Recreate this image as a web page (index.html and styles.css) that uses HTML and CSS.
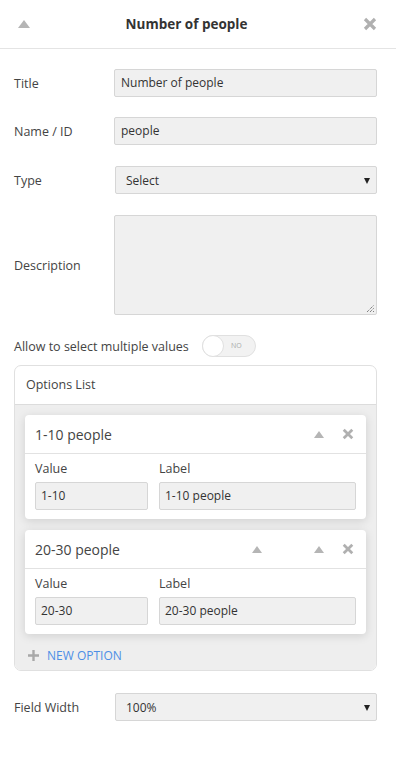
FILE: index.html
```html
<!DOCTYPE html>
<html>
<head>
  <title>Number of people</title>
  <link rel="stylesheet" href="styles.css">
</head>
<body>
  <div class="panel">
    <div class="panel-header">
      <span class="icon-up big"></span>
      <h1>Number of people</h1>
      <svg class="icon-close" width="14" height="14" viewBox="0 0 14 14"><path d="M2 2 L12 12 M12 2 L2 12" stroke="#b0b0b0" stroke-width="3.2"/></svg>
    </div>

    <div class="form">
      <div class="row">
        <label>Title</label>
        <div class="input">Number of people</div>
      </div>
      <div class="row">
        <label>Name / ID</label>
        <div class="input">people</div>
      </div>
      <div class="row type">
        <label>Type</label>
        <div class="input select">Select</div>
      </div>
      <div class="row">
        <label>Description</label>
        <div class="input textarea">
          <svg class="grip" width="9" height="9" viewBox="0 0 9 9"><path d="M1 8 L8 1 M4 8 L8 4 M7 8 L8 7" stroke="#555" stroke-width="1" stroke-dasharray="1 1"/></svg>
        </div>
      </div>
      <div class="toggle-row">
        <label>Allow to select multiple values</label>
        <div class="toggle"><span class="knob"></span><span class="toggle-text">NO</span></div>
      </div>

      <div class="options">
        <div class="options-header">Options List</div>
        <div class="options-body">
          <div class="option">
            <div class="option-header">
              <span class="option-title">1-10 people</span>
              <span class="icon-up"></span>
              <svg class="icon-close" width="12" height="12" viewBox="0 0 14 14"><path d="M2 2 L12 12 M12 2 L2 12" stroke="#b0b0b0" stroke-width="3.2"/></svg>
            </div>
            <div class="option-body">
              <div class="field"><span>Value</span><div class="input">1-10</div></div>
              <div class="field"><span>Label</span><div class="input">1-10 people</div></div>
            </div>
          </div>
          <div class="option">
            <div class="option-header">
              <span class="option-title">20-30 people</span>
              <span class="icon-up extra"></span>
              <span class="icon-up"></span>
              <svg class="icon-close" width="12" height="12" viewBox="0 0 14 14"><path d="M2 2 L12 12 M12 2 L2 12" stroke="#b0b0b0" stroke-width="3.2"/></svg>
            </div>
            <div class="option-body">
              <div class="field"><span>Value</span><div class="input">20-30</div></div>
              <div class="field"><span>Label</span><div class="input">20-30 people</div></div>
            </div>
          </div>
          <div class="new-option">
            <svg class="plus" width="11" height="11" viewBox="0 0 11 11"><path d="M5.5 0 V11 M0 5.5 H11" stroke="#a8a8a8" stroke-width="2.4"/></svg>
            NEW OPTION
          </div>
        </div>
      </div>

      <div class="row last">
        <label>Field Width</label>
        <div class="input select">100%</div>
      </div>
    </div>
  </div>
</body>
</html>
```

FILE: styles.css
```css
body {
  margin: 0;
  background: #fff;
  font-family: "Open Sans", "Noto Sans", sans-serif;
  font-size: 12px;
  color: #444;
}

.panel-header {
  display: flex;
  align-items: center;
  height: 48px;
  padding: 0 19px 0 18px;
  border-bottom: 1px solid #e4e4e4;
}

.panel-header h1 {
  flex: 1;
  margin: 0;
  padding-right: 20px;
  text-align: center;
  font-size: 13.5px;
  font-weight: bold;
  color: #333;
}

.icon-up {
  display: inline-block;
  width: 0;
  height: 0;
  border-left: 5px solid transparent;
  border-right: 5px solid transparent;
  border-bottom: 7px solid #b5b5b5;
}

.icon-up.big {
  border-left-width: 6px;
  border-right-width: 6px;
  border-bottom-width: 8px;
}

.form {
  padding: 20px 19px 0 14px;
}

.row {
  display: grid;
  grid-template-columns: 100px 1fr;
  align-items: center;
  margin-bottom: 20px;
}

.row.type {
  margin-top: 21px;
  margin-bottom: 21px;
}

.row label {
  font-size: 12.5px;
}

.input {
  height: 26px;
  line-height: 26px;
  padding: 0 6px;
  background: #f0f0f0;
  border: 1px solid #d6d6d6;
  border-radius: 2px;
  font-size: 12px;
  color: #333;
}

.select {
  position: relative;
  padding-left: 10px;
  margin-left: 1px;
  line-height: 28px;
}

.select::after {
  content: "";
  position: absolute;
  right: 6px;
  top: 11px;
  border-left: 3.5px solid transparent;
  border-right: 3.5px solid transparent;
  border-top: 6px solid #222;
}

.textarea {
  position: relative;
  height: 98px;
}

.grip {
  position: absolute;
  right: 1px;
  bottom: 1px;
}

.toggle-row {
  display: flex;
  align-items: center;
  gap: 13px;
}

.toggle-row label {
  font-size: 12.5px;
}

.toggle {
  position: relative;
  width: 52px;
  height: 20px;
  border: 1px solid #e0e0e0;
  border-radius: 11px;
  background: #f2f2f2;
}

.knob {
  position: absolute;
  left: -1px;
  top: -1px;
  width: 20px;
  height: 20px;
  border: 1px solid #e0e0e0;
  border-radius: 50%;
  background: #fff;
}

.toggle-text {
  position: absolute;
  right: 13px;
  top: 5px;
  font-size: 7px;
  color: #aaa;
}

.options {
  margin-top: 8px;
  border: 1px solid #e0e0e0;
  border-radius: 7px;
  overflow: hidden;
}

.options-header {
  height: 38px;
  line-height: 38px;
  padding-left: 11px;
  border-bottom: 1px solid #dcdcdc;
  font-size: 12.5px;
  color: #444;
}

.options-body {
  background: #eeeeee;
  padding: 10px 10px 5px;
}

.option {
  background: #fff;
  border-radius: 4px;
  box-shadow: 0 2px 10px rgba(0, 0, 0, 0.13);
  margin-bottom: 11px;
}

.option-header {
  display: flex;
  align-items: center;
  gap: 18px;
  height: 38px;
  padding: 0 12px 0 10px;
  border-bottom: 1px solid #e2e2e2;
}

.option-title {
  flex: 1;
  font-size: 14px;
  color: #444;
}

.icon-up.extra {
  margin-right: 34px;
}

.option-body {
  display: grid;
  grid-template-columns: 113px 1fr;
  gap: 11px;
  padding: 6px 10px 9px;
}

.field span {
  display: block;
  font-size: 12.5px;
  margin-bottom: 5px;
}

.field .input {
  padding: 0 5px;
}

.new-option {
  display: flex;
  align-items: center;
  height: 20px;
  padding-left: 3px;
  color: #4d8fe6;
  font-size: 12px;
}

.plus {
  margin-right: 8px;
}

.row.last {
  margin-top: 22px;
}
```
